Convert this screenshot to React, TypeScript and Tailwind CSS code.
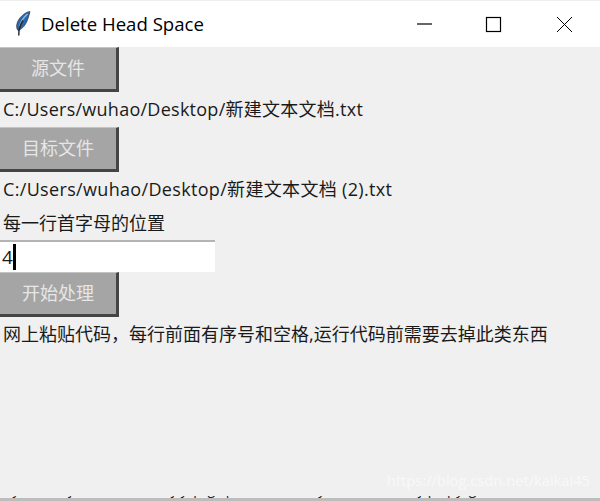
function Feather() {
  return (
    <svg width="20" height="28" viewBox="0 0 20 28" className="shrink-0">
      <path d="M16 1.5C10 2.5 4 8.5 2.8 14.5c-.5 2.4 0 4.4 1.2 6 4.6-1.4 8.4-6.5 10-12 .8-2.5 1.6-5 2-7Z" fill="#2d66a8" stroke="#2a3442" strokeWidth="0.7" />
      <path d="M13.5 4C10 7 6.8 11.5 5.5 16.5" stroke="#86b8e6" strokeWidth="1.6" fill="none" />
      <path d="M4.8 25.5C4.5 20 6 15 9 10.5" stroke="#222a36" strokeWidth="1.5" fill="none" />
    </svg>
  );
}

function TkButton({ label }: { label: string }) {
  return (
    <div className="flex h-[45px] w-[119px] items-center justify-center border-t border-r-[3px] border-b-[3px] border-t-[#c4c4c4] border-r-[#444444] border-b-[#444444] bg-[#a5a5a5] text-[18px] text-[#e6e6e6]">
      {label}
    </div>
  );
}

function Label({ text, className }: { text: string; className: string }) {
  return <div className={`flex items-center pl-[3px] text-[18px] whitespace-nowrap text-[#1a1a1a] ${className}`}>{text}</div>;
}

export default function App() {
  return (
    <div
      className="relative flex h-[501px] w-[600px] flex-col overflow-hidden bg-[#f0f0f0]"
      style={{ fontFamily: '"Open Sans", "Noto Sans CJK SC", sans-serif' }}
    >
      <div className="flex h-[47px] shrink-0 items-center border-t border-[#eeeeee] bg-white pl-[14px] text-black">
        <Feather />
        <span className="ml-[7px] text-[18.6px]">Delete Head Space</span>
        <div className="ml-auto flex items-center">
          <svg width="200" height="20" viewBox="0 0 200 20" fill="none" stroke="#000">
            <path d="M17 10h15" strokeWidth="1.2" />
            <rect x="86.5" y="3.5" width="14" height="14" strokeWidth="1.2" />
            <path d="M157 3l15 15M172 3l-15 15" strokeWidth="1" />
          </svg>
        </div>
      </div>

      <TkButton label="源文件" />
      <Label text="C:/Users/wuhao/Desktop/新建文本文档.txt" className="h-[35px] tracking-[0.26px]" />
      <TkButton label="目标文件" />
      <Label text="C:/Users/wuhao/Desktop/新建文本文档 (2).txt" className="h-[35px] tracking-[0.33px]" />
      <Label text="每一行首字母的位置" className="h-[33px]" />
      <div className="flex h-[32px] w-[215px] items-center border-t-2 border-[#b4b4b4] bg-white text-[19px] text-[#1a1a1a]">
        <span className="pl-[2px]">4</span>
        <span className="h-[26px] w-[3px] bg-black" />
      </div>
      <TkButton label="开始处理" />
      <Label text="网上粘贴代码，每行前面有序号和空格,运行代码前需要去掉此类东西" className="h-[35px]" />

      <div className="mt-auto h-[2px] overflow-hidden bg-[#f0f0f0]">
        <div className="-mt-[15px] pl-[3px] text-[14px] leading-[16px] tracking-[1px] whitespace-nowrap text-[#222222]">
          Python i j   行 , 代码前面    j  y  p   g  q , 每 行 前面 y 序号 , 去掉 ,   j p q  y g 
        </div>
      </div>
      <div className="h-[3px] bg-[#bdbdbd]" />

      <div className="absolute right-[10px] bottom-[10px] text-[14.7px] text-white/60">https://blog.csdn.net/kaikai45</div>
    </div>
  );
}
